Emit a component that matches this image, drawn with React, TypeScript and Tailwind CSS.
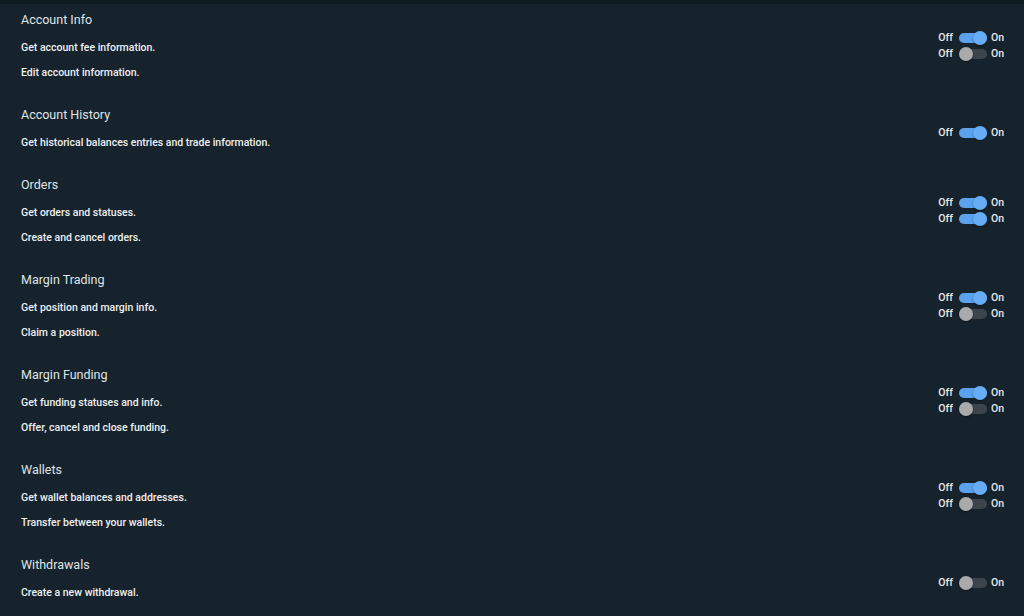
import React from 'react';

type Perm = { text: string; on: boolean };
type Group = { title: string; perms: Perm[] };

const groups: Group[] = [
  {
    title: 'Account Info',
    perms: [
      { text: 'Get account fee information.', on: true },
      { text: 'Edit account information.', on: false },
    ],
  },
  {
    title: 'Account History',
    perms: [{ text: 'Get historical balances entries and trade information.', on: true }],
  },
  {
    title: 'Orders',
    perms: [
      { text: 'Get orders and statuses.', on: true },
      { text: 'Create and cancel orders.', on: true },
    ],
  },
  {
    title: 'Margin Trading',
    perms: [
      { text: 'Get position and margin info.', on: true },
      { text: 'Claim a position.', on: false },
    ],
  },
  {
    title: 'Margin Funding',
    perms: [
      { text: 'Get funding statuses and info.', on: true },
      { text: 'Offer, cancel and close funding.', on: false },
    ],
  },
  {
    title: 'Wallets',
    perms: [
      { text: 'Get wallet balances and addresses.', on: true },
      { text: 'Transfer between your wallets.', on: false },
    ],
  },
  {
    title: 'Withdrawals',
    perms: [{ text: 'Create a new withdrawal.', on: false }],
  },
];

const Toggle = ({ on }: { on: boolean }) => (
  <div className="flex h-4 items-center text-[10.5px] font-medium text-[#e6e9eb]">
    <span className="mr-[6px]">Off</span>
    <span className={`relative h-[10px] w-[28px] rounded-full ${on ? 'bg-[#5aa2ee]' : 'bg-[#3c454b]'}`}>
      <span
        className={`absolute top-1/2 h-[14px] w-[14px] -translate-y-1/2 rounded-full shadow-[0_1px_2px_rgba(0,0,0,0.4)] ${
          on ? 'right-0 bg-[#66adf6]' : 'left-0 bg-[#a8aaac]'
        }`}
      />
    </span>
    <span className="ml-[4px]">On</span>
  </div>
);

export default function App() {
  return (
    <div
      className="min-h-[616px] w-full border-t-4 border-[#111b22] bg-[#17232c] pl-[21px] pr-[20px] pt-[6px]"
      style={{ fontFamily: 'Roboto, "Noto Sans", sans-serif' }}
    >
      {groups.map((g) => (
        <section key={g.title} className="flex justify-between pb-[20px]">
          <div>
            <h3 className="h-5 text-[12.5px] leading-5 text-[#dfe3e6]">{g.title}</h3>
            <div className="mt-[5px]">
              {g.perms.map((p) => (
                <p key={p.text} className="text-[10.5px] font-medium leading-[25px] text-[#eef0f2]">
                  {p.text}
                </p>
              ))}
            </div>
          </div>
          <div className="pt-[20px]">
            {g.perms.map((p) => (
              <Toggle key={p.text} on={p.on} />
            ))}
          </div>
        </section>
      ))}
    </div>
  );
}
